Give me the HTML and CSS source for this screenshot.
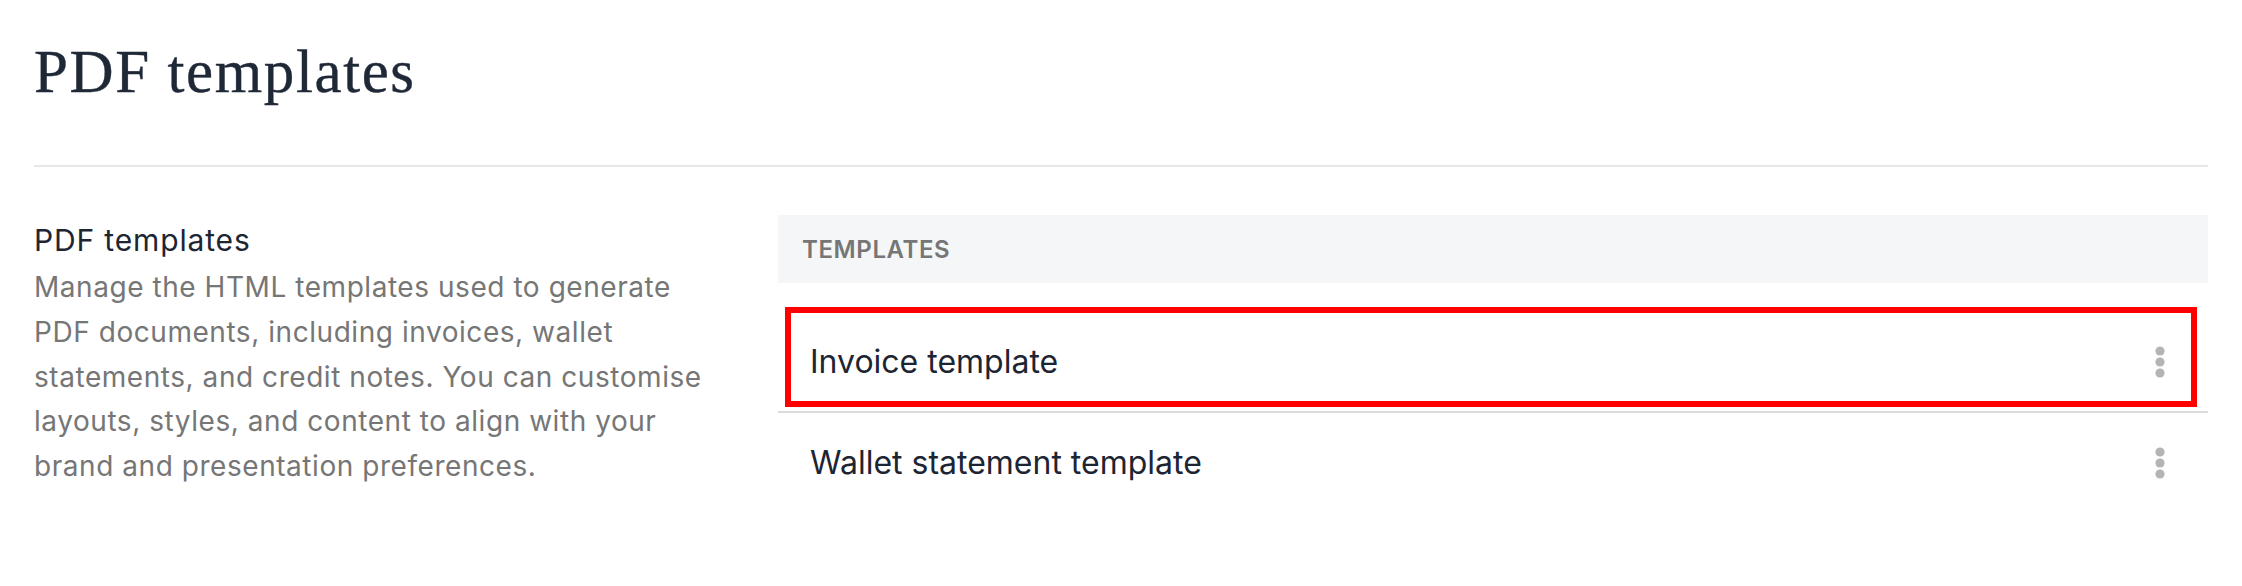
FILE: index.html
```html
<!DOCTYPE html>
<html lang="en">
<head>
<meta charset="utf-8">
<title>PDF templates</title>
<link rel="stylesheet" href="styles.css">
</head>
<body>
<div class="page">
  <header class="page-header">
    <h1 class="page-title">PDF templates</h1>
  </header>
  <section class="settings">
    <div class="settings-info">
      <h2 class="settings-heading">PDF templates</h2>
      <p class="settings-desc">Manage the HTML templates used to generate PDF documents, including invoices, wallet statements, and credit notes. You can customise layouts, styles, and content to align with your brand and presentation preferences.</p>
    </div>
    <div class="settings-panel">
      <div class="panel-header">TEMPLATES</div>
      <ul class="template-list">
        <li class="template-row is-highlighted">
          <span class="template-name">Invoice template</span>
          <button class="menu-btn" aria-label="More">
            <svg viewBox="0 0 48 48" width="48" height="48"><circle cx="24" cy="13" r="4.6"/><circle cx="24" cy="24" r="4.6"/><circle cx="24" cy="35" r="4.6"/></svg>
          </button>
          <span class="highlight-box"></span>
        </li>
        <li class="template-row">
          <span class="template-name">Wallet statement template</span>
          <button class="menu-btn" aria-label="More">
            <svg viewBox="0 0 48 48" width="48" height="48"><circle cx="24" cy="13" r="4.6"/><circle cx="24" cy="24" r="4.6"/><circle cx="24" cy="35" r="4.6"/></svg>
          </button>
        </li>
      </ul>
    </div>
  </section>
</div>
</body>
</html>
```

FILE: styles.css
```css
* { box-sizing: border-box; }

html, body {
  margin: 0;
  padding: 0;
  background: #ffffff;
}

body {
  font-family: Inter, "Noto Sans", "Liberation Sans", sans-serif;
  color: #1d2533;
}

.page {
  width: 2242px;
  padding: 0 34px;
}

.page-header {
  padding-top: 36px;
  padding-bottom: 57px;
  border-bottom: 2px solid #e7e7e7;
}

.page-title {
  margin: 0;
  font-family: "Liberation Serif", "Times New Roman", serif;
  font-weight: 400;
  font-size: 61px;
  line-height: 72px;
  letter-spacing: 1.6px;
  color: #1f2837;
  -webkit-text-stroke: 0.4px #1f2837;
}

.settings {
  display: grid;
  grid-template-columns: 690px 1fr;
  column-gap: 54px;
  padding-top: 48px;
}

.settings-heading {
  margin: 3px 0 2px;
  font-size: 30px;
  font-weight: 400;
  line-height: 45px;
  letter-spacing: 0.85px;
  color: #1d2533;
}

.settings-desc {
  margin: 0;
  font-size: 28px;
  line-height: 44.8px;
  letter-spacing: 0.55px;
  color: #767676;
}

.panel-header {
  height: 68px;
  display: flex;
  align-items: center;
  padding: 0 24px;
  background: #f5f6f8;
  font-size: 24px;
  font-weight: 600;
  letter-spacing: 0.6px;
  color: #767676;
}

.template-list {
  list-style: none;
  margin: 30px 0 0;
  padding: 0;
}

.template-row {
  position: relative;
  height: 100px;
  display: flex;
  align-items: center;
  justify-content: space-between;
  padding: 0 24px 0 32px;
  border-bottom: 2px solid #dcdcdc;
}

.template-row:last-child {
  border-bottom: none;
}

.template-name {
  font-size: 32px;
  line-height: 40px;
  color: #1d2533;
}

.menu-btn {
  width: 48px;
  height: 48px;
  padding: 0;
  border: none;
  background: none;
  display: flex;
  align-items: center;
  justify-content: center;
}

.menu-btn svg {
  display: block;
  fill: #b4b4b4;
}

.highlight-box {
  position: absolute;
  top: -6px;
  left: 7px;
  right: 11px;
  height: 100px;
  border: 6px solid #ff0000;
  pointer-events: none;
}
```
